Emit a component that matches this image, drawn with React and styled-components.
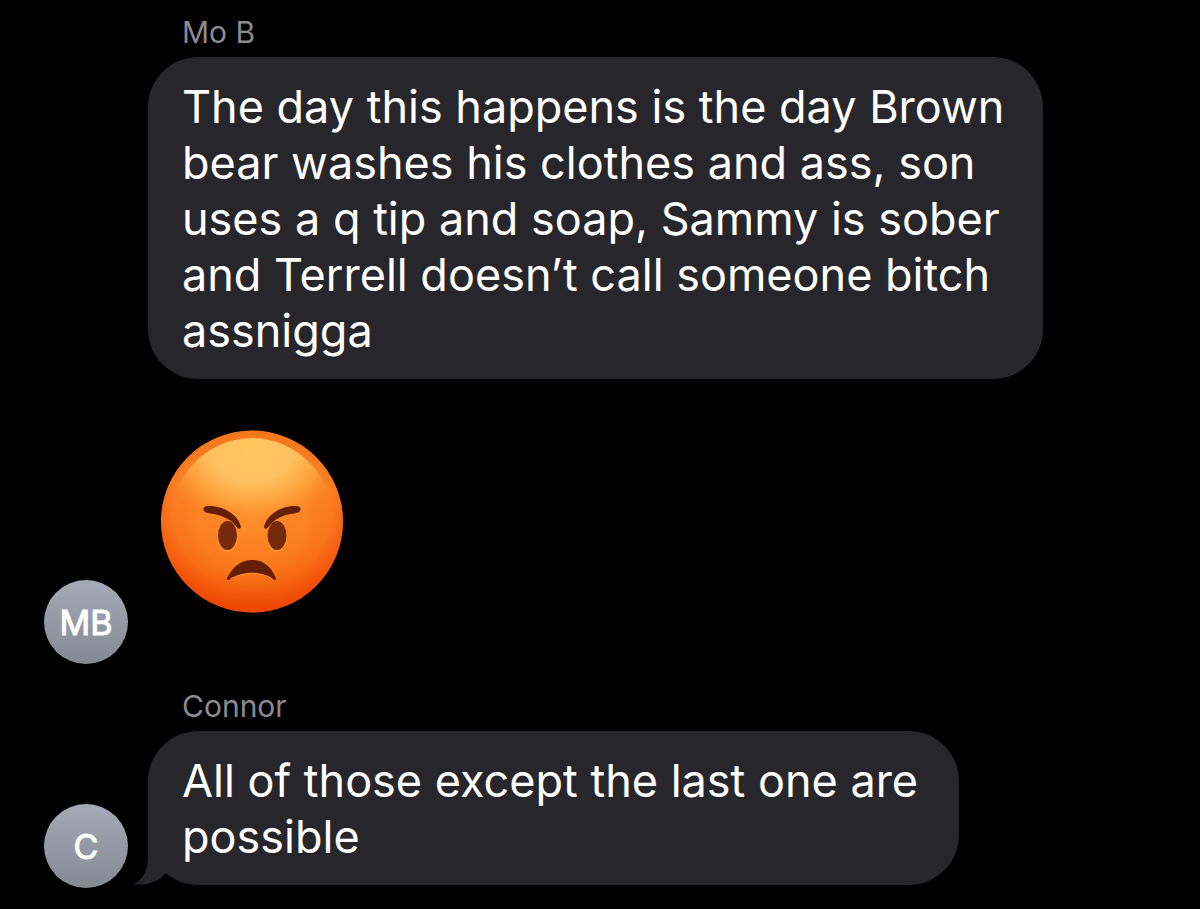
import React from "react";
import styled, { createGlobalStyle } from "styled-components";

const GlobalStyle = createGlobalStyle`
  *, *::before, *::after { box-sizing: border-box; }
  body {
    margin: 0;
    background: #000;
    font-family: Inter, "Liberation Sans", sans-serif;
  }
`;

const Thread = styled.main`
  display: flex;
  flex-direction: column;
  gap: 24px;
  padding: 14px 44px 20px;
`;

const Group = styled.section`
  display: flex;
  align-items: flex-end;
  gap: 20px;
`;

const Avatar = styled.div`
  flex: none;
  display: flex;
  align-items: center;
  justify-content: center;
  width: 84px;
  height: 84px;
  padding-top: 2px;
  border-radius: 50%;
  background: linear-gradient(#a5aab8, #858992);
  color: #fff;
  font-size: 34px;
  font-weight: 400;
  line-height: 40px;
  -webkit-text-stroke: 1px #fff;
  stroke-linejoin: round;
`;

const Messages = styled.div`
  flex: 1;
  min-width: 0;
  display: flex;
  flex-direction: column;
  align-items: flex-start;
  padding-bottom: ${(p) => p.$inset}px;
`;

const Sender = styled.h2`
  margin: 0 0 7px;
  padding-left: 34px;
  color: #8b8b90;
  font-size: 30px;
  font-weight: 400;
  line-height: 36px;
`;

const Bubble = styled.div`
  position: relative;
  width: 100%;
  max-width: ${(p) => p.$max}px;
  padding: 22px 34px 20px;
  border-radius: 50px;
  background: #27262b;
  color: #fff;
`;

const Text = styled.p`
  margin: 0;
  font-size: 45px;
  line-height: 56px;
`;

const Tail = styled.svg`
  position: absolute;
  left: -14px;
  bottom: 0;
`;

const Emoji = styled.svg`
  display: block;
  margin: 50px 0 0 12px;
`;

function AngryFace() {
  return (
    <Emoji width="184" height="184" viewBox="0 0 184 184" role="img" aria-label="Angry face">
      <defs>
        <linearGradient id="base" x1="0" y1="0" x2="0" y2="1">
          <stop offset="0" stopColor="#f47a20" />
          <stop offset="0.3" stopColor="#fb8a2a" />
          <stop offset="0.55" stopColor="#fb7b1e" />
          <stop offset="0.8" stopColor="#f6640f" />
          <stop offset="1" stopColor="#ea4a04" />
        </linearGradient>
        <radialGradient id="glow" cx="0.5" cy="0.48" r="0.55">
          <stop offset="0" stopColor="#ff9630" stopOpacity="0.6" />
          <stop offset="0.55" stopColor="#fd8624" stopOpacity="0.5" />
          <stop offset="1" stopColor="#f4500a" stopOpacity="0" />
        </radialGradient>
        <radialGradient
          id="shine"
          gradientUnits="userSpaceOnUse"
          cx="0"
          cy="0"
          r="1"
          gradientTransform="translate(92 18) scale(98 78)"
        >
          <stop offset="0" stopColor="#ffc65f" />
          <stop offset="0.45" stopColor="#ffc462" stopOpacity="0.95" />
          <stop offset="0.7" stopColor="#ffb850" stopOpacity="0.6" />
          <stop offset="0.88" stopColor="#ffa842" stopOpacity="0.18" />
          <stop offset="1" stopColor="#ff9a38" stopOpacity="0" />
        </radialGradient>
        <radialGradient id="rim" cx="0.5" cy="0.44" r="0.57">
          <stop offset="0.76" stopColor="#f04404" stopOpacity="0" />
          <stop offset="1" stopColor="#ec4003" stopOpacity="0.65" />
        </radialGradient>
      </defs>
      <circle cx="92" cy="92.500" r="91" fill="url(#base)" />
      <circle cx="92" cy="92.500" r="91" fill="url(#glow)" />
      <circle cx="92" cy="92.500" r="91" fill="url(#rim)" />
      <ellipse cx="92" cy="97" rx="83" ry="88" fill="url(#shine)" />
      <g fill="#ffb052" opacity="0.45" transform="translate(0 1)">
        <ellipse cx="67.500" cy="107" rx="10" ry="15" />
        <ellipse cx="117" cy="107" rx="10" ry="15" />
        <path d="M67 149C74 136 82 131 92 131C102 131 110 136 116 149C116 152 114 152 112 149C99 142 85 142 71 149C69 152 67 152 67 149Z" />
      </g>
      <g fill="#752a0c">
        <ellipse cx="67.500" cy="106.500" rx="9.500" ry="14.500" />
        <ellipse cx="117" cy="106.500" rx="9.500" ry="14.500" />
      </g>
      <g fill="#632005">
        <path d="M47 77C60 76 78 84 81 98C80 101 78 100 76 97C69 88 59 86 48 84C42 83 42 78 47 77Z" />
        <path d="M137 77C124 76 107 84 104 98C105 101 107 100 109 97C116 88 125 86 136 84C142 83 142 78 137 77Z" />
        <path d="M67 149C74 136 82 131 92 131C102 131 110 136 116 149C116 152 114 152 112 149C99 142 85 142 71 149C69 152 67 152 67 149Z" />
      </g>
    </Emoji>
  );
}

function BubbleTail() {
  return (
    <Tail width="34" height="50" viewBox="0 0 34 50" aria-hidden="true">
      <path d="M14 0V20C14 34 10 44 0 49C11 51 23 48 32 38L34 30V0Z" fill="#27262b" />
    </Tail>
  );
}

export default function App() {
  return (
    <>
      <GlobalStyle />
      <Thread>
        <Group>
          <Avatar>MB</Avatar>
          <Messages $inset={51}>
            <Sender>Mo B</Sender>
            <Bubble $max={895}>
              <Text>
                The day this happens is the day Brown bear washes his clothes and ass, son uses a q tip and
                soap, Sammy is sober and Terrell doesn’t call someone bitch assnigga
              </Text>
            </Bubble>
            <AngryFace />
          </Messages>
        </Group>
        <Group>
          <Avatar>C</Avatar>
          <Messages $inset={3}>
            <Sender>Connor</Sender>
            <Bubble $max={811}>
              <Text>All of those except the last one are possible</Text>
              <BubbleTail />
            </Bubble>
          </Messages>
        </Group>
      </Thread>
    </>
  );
}
